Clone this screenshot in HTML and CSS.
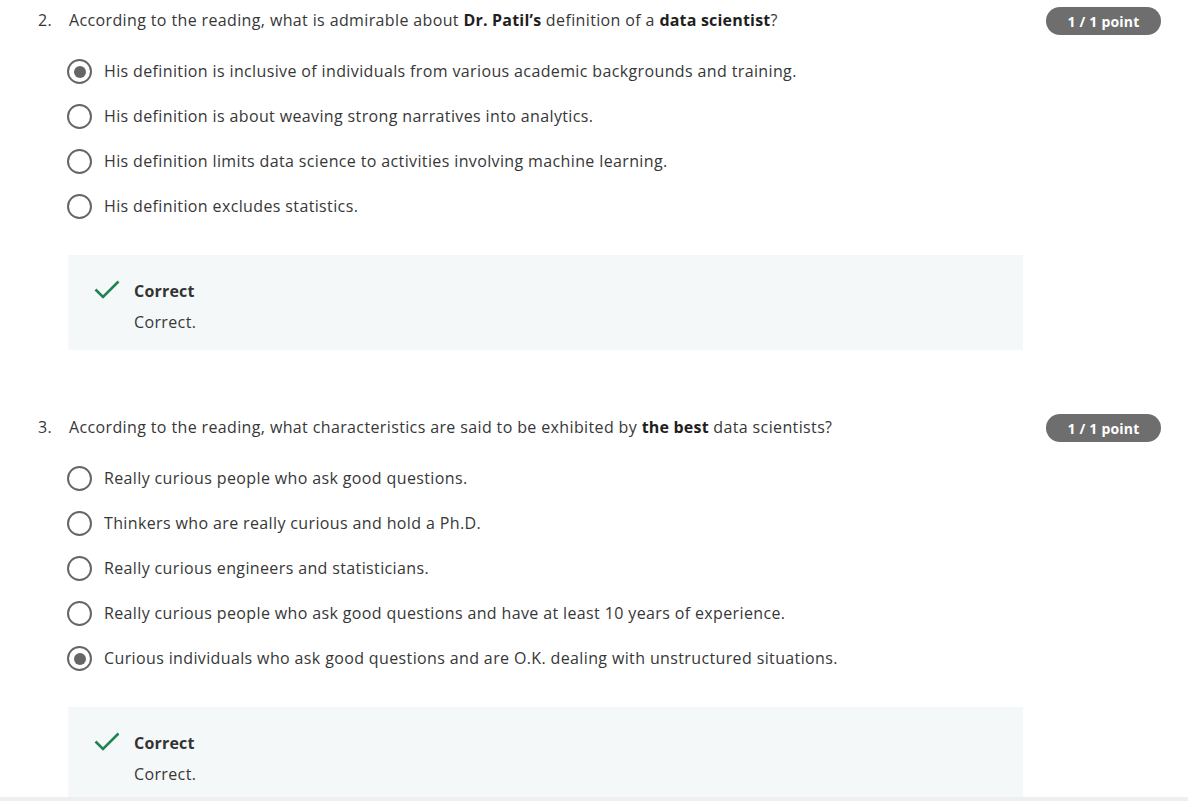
FILE: index.html
```html
<!DOCTYPE html>
<html>
<head>
<meta charset="utf-8">
<link rel="stylesheet" href="styles.css">
</head>
<body>
<div class="page">
  <section class="question q2">
    <div class="q-head">
      <span class="q-num">2.</span>
      <span class="q-text">According to the reading, what is admirable about <b>Dr. Patil’s</b> definition of a <b>data scientist</b>?</span>
      <span class="badge">1 / 1 point</span>
    </div>
    <ul class="options">
      <li class="opt"><span class="radio checked"></span><span>His definition is inclusive of individuals from various academic backgrounds and training.</span></li>
      <li class="opt"><span class="radio"></span><span>His definition is about weaving strong narratives into analytics.</span></li>
      <li class="opt"><span class="radio"></span><span>His definition limits data science to activities involving machine learning.</span></li>
      <li class="opt"><span class="radio"></span><span>His definition excludes statistics.</span></li>
    </ul>
    <div class="feedback">
      <svg class="check" width="26" height="20" viewBox="0 0 26 20"><path d="M1.5 9.5 L9 17 L24.5 1.5" fill="none" stroke="#1f8354" stroke-width="2.6"/></svg>
      <div class="fb-text">
        <div class="fb-title">Correct</div>
        <div class="fb-body">Correct.</div>
      </div>
    </div>
  </section>

  <section class="question q3">
    <div class="q-head">
      <span class="q-num">3.</span>
      <span class="q-text">According to the reading, what characteristics are said to be exhibited by <b>the best</b> data scientists?</span>
      <span class="badge">1 / 1 point</span>
    </div>
    <ul class="options">
      <li class="opt"><span class="radio"></span><span>Really curious people who ask good questions.</span></li>
      <li class="opt"><span class="radio"></span><span>Thinkers who are really curious and hold a Ph.D.</span></li>
      <li class="opt"><span class="radio"></span><span>Really curious engineers and statisticians.</span></li>
      <li class="opt"><span class="radio"></span><span>Really curious people who ask good questions and have at least 10 years of experience.</span></li>
      <li class="opt"><span class="radio checked"></span><span>Curious individuals who ask good questions and are O.K. dealing with unstructured situations.</span></li>
    </ul>
    <div class="feedback">
      <svg class="check" width="26" height="20" viewBox="0 0 26 20"><path d="M1.5 9.5 L9 17 L24.5 1.5" fill="none" stroke="#1f8354" stroke-width="2.6"/></svg>
      <div class="fb-text">
        <div class="fb-title">Correct</div>
        <div class="fb-body">Correct.</div>
      </div>
    </div>
  </section>
</div>
<div class="bottom-bar"></div>
</body>
</html>
```

FILE: styles.css
```css
html, body {
  margin: 0;
  padding: 0;
  background: #fff;
}
body {
  font-family: "Open Sans", "Noto Sans", sans-serif;
  font-size: 16px;
  color: #373737;
  letter-spacing: 0.37px;
  overflow: hidden;
}
.page {
  padding: 0 27px 0 38px;
}
.question {
  display: flex;
  flex-direction: column;
}
.q3 {
  margin-top: 57px;
}
.q-head {
  display: flex;
  align-items: center;
  padding-top: 7px;
  height: 28px;
}
.q-num {
  width: 31px;
  flex: none;
  line-height: 24px;
  margin-top: -2px;
}
.q-text {
  flex: 1;
  line-height: 24px;
  margin-top: -2px;
}
.q-text b {
  font-weight: 700;
  color: #1f1f1f;
  letter-spacing: 0.2px;
}
.badge {
  flex: none;
  width: 115px;
  height: 28px;
  border-radius: 14px;
  background: #6e6e6e;
  color: #fff;
  font-size: 14px;
  font-weight: 700;
  letter-spacing: 0.2px;
  display: flex;
  align-items: center;
  justify-content: center;
}
.options {
  list-style: none;
  margin: 14px 0 0 30px;
  padding: 0;
}
.opt {
  display: flex;
  align-items: center;
  height: 45px;
  line-height: 24px;
}
.opt > span:last-child {
  margin-top: -2px;
}
.radio {
  box-sizing: border-box;
  width: 25px;
  height: 25px;
  border: 2.5px solid #666;
  border-radius: 50%;
  margin-right: 12px;
  margin-left: -1px;
  flex: none;
  display: flex;
  align-items: center;
  justify-content: center;
}
.radio.checked::after {
  content: "";
  width: 12px;
  height: 12px;
  border-radius: 50%;
  background: #666;
}
.feedback {
  margin: 26px 0 0 30px;
  width: 955px;
  box-sizing: border-box;
  background: #f5f8f8;
  display: flex;
  align-items: flex-start;
  padding: 24px 0 16px 26px;
}
.check {
  flex: none;
  margin-top: 1px;
  margin-right: 14px;
}
.fb-text {
  line-height: 24px;
}
.fb-title {
  font-weight: 700;
  color: #333;
  letter-spacing: 0.2px;
}
.fb-body {
  margin-top: 7px;
}
.bottom-bar {
  position: fixed;
  left: 0;
  right: 0;
  bottom: 0;
  height: 4px;
  background: #efefef;
}
```
